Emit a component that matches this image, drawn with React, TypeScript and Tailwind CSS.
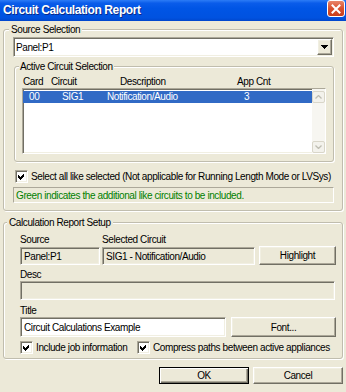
import React from "react";

const sunken =
  "border border-t-[#ACA899] border-l-[#ACA899] border-r-white border-b-white shadow-[inset_1px_1px_0_#716F64,inset_-1px_-1px_0_#F1EFE2]";
const raised =
  "border border-t-white border-l-white border-r-[#716F64] border-b-[#716F64] shadow-[inset_-1px_-1px_0_#ACA899,inset_1px_1px_0_#F1EFE2]";
const group =
  "border border-[#C0BDAE] rounded-[3px] shadow-[inset_1px_1px_0_#fff,1px_1px_0_#fff]";

function Check() {
  return (
    <span className={`w-[13px] h-[13px] bg-white flex items-center justify-center shrink-0 ${sunken}`}>
      <svg width="7" height="7" viewBox="0 0 7 7" shapeRendering="crispEdges">
        <polygon points="0,2 2,4 6,0 6,3 2,7 0,5" fill="#000" />
      </svg>
    </span>
  );
}

function ScrollBtn({ up }: { up?: boolean }) {
  return (
    <div className="h-[12px] w-[13px] rounded-[2px] border border-[#D9D6C9] bg-[#F3F2EC] flex items-center justify-center">
      <svg width="7" height="4" viewBox="0 0 7 4">
        <polyline
          points={up ? "0.5,3.5 3.5,0.5 6.5,3.5" : "0.5,0.5 3.5,3.5 6.5,0.5"}
          fill="none"
          stroke="#BEBDB2"
          strokeWidth="1.3"
        />
      </svg>
    </div>
  );
}

export default function App() {
  return (
    <div className="w-[346px] h-[392px] bg-[#ECE9D8] overflow-hidden flex flex-col font-['Liberation_Sans',Arial,sans-serif] text-[10px] tracking-[-0.4px] leading-[13px] text-black whitespace-nowrap">
      {/* Title bar */}
      <div className="h-[21px] shrink-0 flex items-start justify-between pl-[3px] pr-[1px] bg-[linear-gradient(180deg,#2C7CF6_0%,#0A5CEA_15%,#0055E5_40%,#0052E0_85%,#0046CC_100%)]">
        <span className="mt-[3px] font-bold text-[12px] tracking-[-0.4px] leading-[15px] text-white [text-shadow:1px_1px_0_#0A2A8A]">
          Circuit Calculation Report
        </span>
        <div className="w-[18px] h-[17px] rounded-[3px] border border-white bg-[linear-gradient(180deg,#E9856A_0%,#D9512E_50%,#C63E1C_100%)] flex items-center justify-center">
          <svg width="10" height="10" viewBox="0 0 10 10">
            <path d="M1.5 1.5 L8.5 8.5 M8.5 1.5 L1.5 8.5" stroke="#fff" strokeWidth="2" strokeLinecap="square" />
          </svg>
        </div>
      </div>

      {/* Source Selection */}
      <fieldset className={`mx-[3px] mt-[2px] ${group}`}>
        <legend className="ml-[5px] px-[2px] leading-[13px] bg-[#ECE9D8]">Source Selection</legend>
        <div className="pl-[9px] pt-[1px] pb-[7px] flex flex-col">
          {/* Combo */}
          <div className={`w-[321px] h-[20px] bg-white flex items-center ${sunken}`}>
            <span className="pl-[2px] flex-1">Panel:P1</span>
            <div className={`w-[15px] h-[16px] mr-[1px] bg-[#ECE9D8] flex items-center justify-center ${raised}`}>
              <svg width="7" height="4" viewBox="0 0 7 4" shapeRendering="crispEdges">
                <polygon points="0,0 7,0 3.5,4" fill="#000" />
              </svg>
            </div>
          </div>

          {/* Active Circuit Selection */}
          <fieldset className={`ml-[1px] mt-[3px] w-[320px] ${group}`}>
            <legend className="ml-[4px] px-[1px] leading-[13px] bg-[#ECE9D8]">Active Circuit Selection</legend>
            <div className="pl-[7px] pt-[1px] pb-[7px] flex flex-col">
              <div className="h-[14px] flex items-center">
                <span className="w-[29px] pl-[1px]">Card</span>
                <span className="w-[69px]">Circuit</span>
                <span className="w-[117px]">Description</span>
                <span>App Cnt</span>
              </div>
              <div className={`w-[304px] h-[66px] bg-white flex ${sunken}`}>
                <div className="flex-1 pt-[2px]">
                  <div className="h-[12px] leading-[12px] bg-[#316AC5] text-white flex">
                    <span className="w-[39px] pl-[6px]">00</span>
                    <span className="w-[45px]">SIG1</span>
                    <span className="w-[137px]">Notification/Audio</span>
                    <span>3</span>
                  </div>
                </div>
                <div className="w-[13px] bg-[#F7F6F1] flex flex-col justify-between pt-[2px]">
                  <ScrollBtn up />
                  <ScrollBtn />
                </div>
              </div>
            </div>
          </fieldset>

          <div className="mt-[8px] ml-[2px] h-[13px] flex items-center gap-[3px]">
            <Check />
            <span>Select all like selected (Not applicable for Running Length Mode or LVSys)</span>
          </div>

          <div className="mt-[4px] w-[321px] h-[16px] border border-t-[#ACA899] border-l-[#ACA899] border-r-white border-b-white flex items-center pl-[2px] text-[#008000]">
            Green indicates the additional like circuits to be included.
          </div>
        </div>
      </fieldset>

      {/* Calculation Report Setup */}
      <fieldset className={`mx-[3px] mt-[5px] ${group}`}>
        <legend className="ml-[3px] px-[2px] leading-[13px] bg-[#ECE9D8]">Calculation Report Setup</legend>
        <div className="pl-[16px] pt-[3px] pb-[4px] flex flex-col">
          <div className="h-[14px] flex items-center">
            <span className="w-[82px]">Source</span>
            <span>Selected Circuit</span>
          </div>
          <div className="flex items-start">
            <div className={`mt-[1px] w-[80px] h-[18px] flex items-center pl-[3px] ${sunken}`}>Panel:P1</div>
            <div className={`mt-[1px] ml-[2px] w-[153px] h-[18px] flex items-center pl-[3px] ${sunken}`}>
              SIG1 - Notification/Audio
            </div>
            <button className={`ml-[4px] w-[77px] h-[19px] flex items-center justify-center bg-[#ECE9D8] ${raised}`}>
              Highlight
            </button>
          </div>
          <div className="mt-[3px] h-[13px] flex items-center">Desc</div>
          <div className={`w-[315px] h-[19px] ${sunken}`} />
          <div className="mt-[3px] h-[14px] flex items-center">Title</div>
          <div className="flex items-start">
            <div className={`w-[206px] h-[20px] bg-white flex items-center pl-[3px] ${sunken}`}>
              Circuit Calculations Example
            </div>
            <button className={`ml-[5px] w-[105px] h-[20px] flex items-center justify-center bg-[#ECE9D8] ${raised}`}>
              Font...
            </button>
          </div>
          <div className="mt-[4px] h-[13px] flex items-center">
            <div className="w-[117px] flex items-center gap-[3px]">
              <Check />
              <span>Include job information</span>
            </div>
            <div className="flex items-center gap-[3px]">
              <Check />
              <span>Compress paths between active appliances</span>
            </div>
          </div>
        </div>
      </fieldset>

      {/* Buttons */}
      <div className="mt-[8px] pr-[3px] flex justify-end gap-[4px]">
        <button className="w-[90px] h-[17px] border border-black bg-[#ECE9D8] shadow-[inset_1px_1px_0_#fff,inset_-1px_-1px_0_#716F64,inset_-2px_-2px_0_#ACA899] flex items-center justify-center">
          OK
        </button>
        <button className={`w-[90px] h-[17px] bg-[#ECE9D8] flex items-center justify-center ${raised}`}>
          Cancel
        </button>
      </div>
    </div>
  );
}
